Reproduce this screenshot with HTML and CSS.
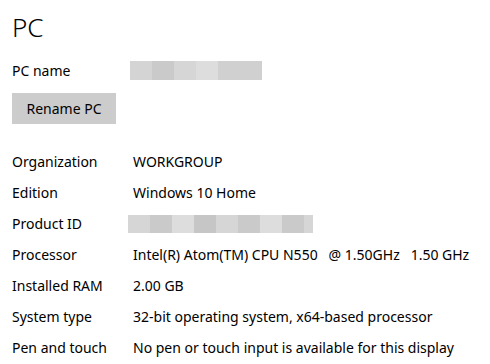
FILE: index.html
```html
<!DOCTYPE html>
<html lang="en">
<head>
  <meta charset="UTF-8" />
  <title>About - PC</title>
  <link rel="stylesheet" href="styles.css">
</head>
<body>
  <div class="page">
    <h1>PC</h1>

    <div class="row name-row">
      <span class="label">PC name</span>
      <span class="blur">
        <i class="s2"></i><i class="s4"></i><i class="s1"></i><i class="s0"></i><i class="s3"></i><i class="s3"></i>
      </span>
    </div>

    <button type="button" class="rename">Rename PC</button>

    <div class="specs">
      <div class="row">
        <span class="label">Organization</span>
        <span class="value">WORKGROUP</span>
      </div>
      <div class="row">
        <span class="label">Edition</span>
        <span class="value">Windows 10 Home</span>
      </div>
      <div class="row">
        <span class="label">Product ID</span>
        <span class="blur id">
          <i class="s1"></i><i class="s4"></i><i class="s0"></i><i class="s5"></i><i class="s1"></i><i class="s4"></i><i class="s0"></i><i class="s4"></i><i class="s1 end"></i>
        </span>
      </div>
      <div class="row">
        <span class="label">Processor</span>
        <span class="value">Intel(R) Atom(TM) CPU N550&nbsp;&nbsp; @ 1.50GHz&nbsp;&nbsp; 1.50 GHz</span>
      </div>
      <div class="row">
        <span class="label">Installed RAM</span>
        <span class="value">2.00 GB</span>
      </div>
      <div class="row">
        <span class="label">System type</span>
        <span class="value">32-bit operating system, x64-based processor</span>
      </div>
      <div class="row">
        <span class="label">Pen and touch</span>
        <span class="value">No pen or touch input is available for this display</span>
      </div>
    </div>
  </div>
</body>
</html>
```

FILE: styles.css
```css
body {
  margin: 0;
  background: #ffffff;
  color: #000;
  font-family: 'Noto Sans', 'Open Sans', sans-serif;
  font-size: 14px;
}

.page {
  padding: 0 12px;
}

h1 {
  margin: 0;
  padding-top: 11px;
  height: 45px;
  font-size: 26px;
  font-weight: 300;
  line-height: 32px;
}

.row {
  display: flex;
  align-items: center;
  height: 31px;
}

.name-row {
  height: 29px;
}

.label {
  width: 121px;
  flex-shrink: 0;
}

.blur {
  display: flex;
  height: 19px;
  margin-left: -3px;
}

.blur.id {
  height: 18px;
  margin-left: -5px;
}

.blur i {
  display: block;
  width: 22px;
}

.blur i.end {
  width: 9px;
}

.s0 { background: #dddddd; }
.s1 { background: #d6d6d6; }
.s2 { background: #d4d4d4; }
.s3 { background: #d0d0d0; }
.s4 { background: #cacaca; }
.s5 { background: #c6c6c6; }

.rename {
  display: block;
  margin: 8px 0 22px;
  width: 104px;
  height: 31px;
  border: none;
  background: #cccccc;
  color: #000;
  font-family: inherit;
  font-size: 14px;
  padding: 0;
}
```
